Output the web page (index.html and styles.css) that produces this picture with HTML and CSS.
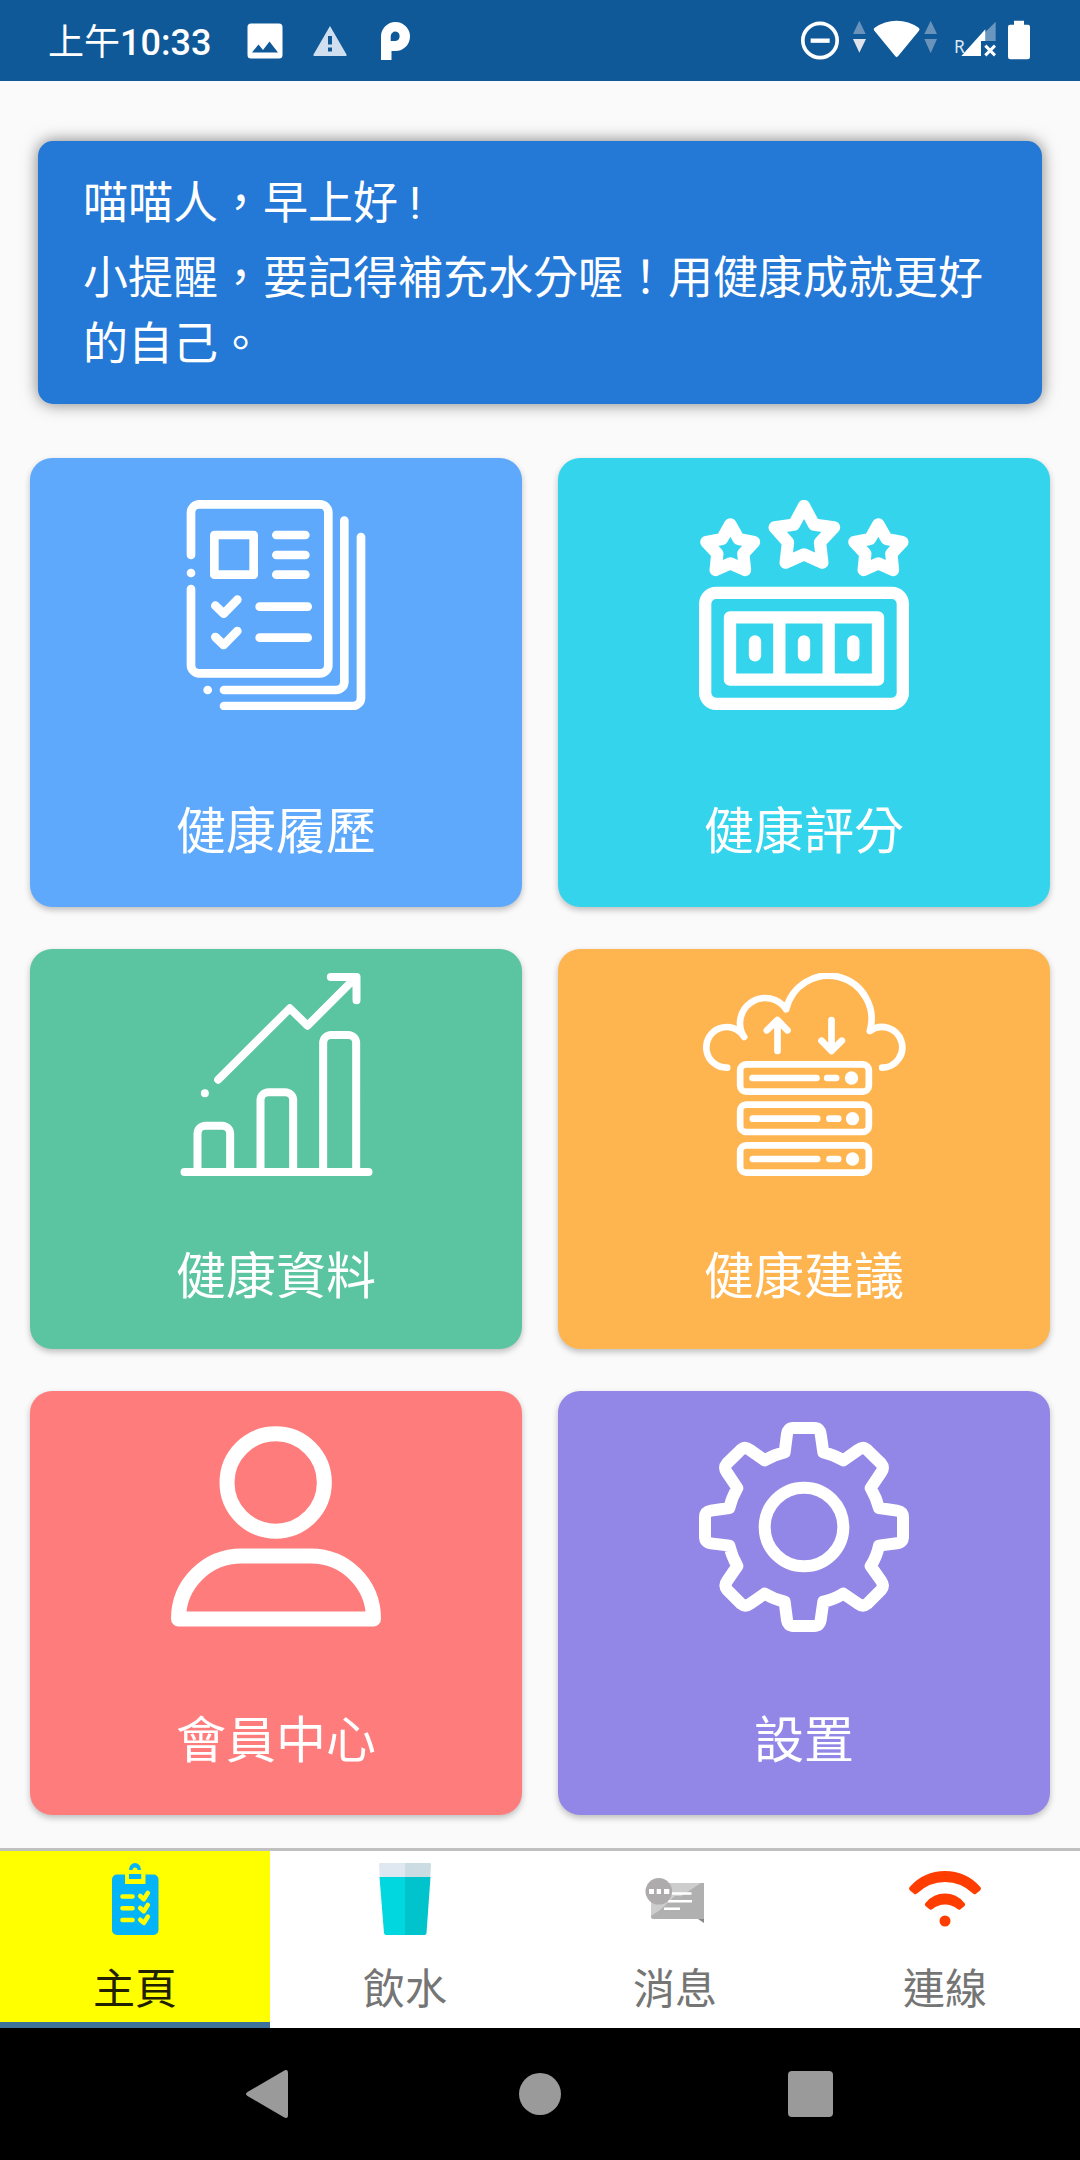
FILE: index.html
```html
<!doctype html>
<html lang="zh-Hant">
  <head>
    <meta charset="utf-8">
    <title>健康</title>
    <link rel="stylesheet" href="styles.css">
  </head>
  <body>
    <div class="status-bar">
      <span class="clock">上午<b>10:33</b></span>
      <svg class="st-image" width="36" height="36" viewBox="0 0 36 36"><path fill="#fff" fill-rule="evenodd" d="M4 0.500h28a3.500 3.500 0 0 1 3.500 3.500v28a3.500 3.500 0 0 1-3.500 3.500h-28a3.500 3.500 0 0 1-3.500-3.500v-28a3.500 3.500 0 0 1 3.500-3.500zM5 29.500h26l-8.500-11-6.500 8.500-4.500-5.500z"/></svg>
      <svg class="st-warn" width="34" height="30" viewBox="0 0 34 30"><path fill="#d0dfef" fill-rule="evenodd" d="M17 0L33.500 28.500Q34 30 32.500 30H1.500Q0 30 0.500 28.500ZM15 10v8.500h4V10zM15 21.500v4h4v-4z"/></svg>
      <svg class="st-park" width="29" height="38" viewBox="0 0 29 38"><path fill="#fff" fill-rule="evenodd" d="M0 38V14.500A14.500 14.500 0 1 1 14.500 29H10.500V38ZM14.500 9.500A4.800 4.800 0 0 0 9.700 14.300V19H14.500A4.800 4.800 0 0 0 14.500 9.500Z"/></svg>

      <svg class="st-dnd" width="38" height="81" viewBox="64 0 114 243"><circle cx="121" cy="121.500" r="51.500" fill="none" stroke="#fff" stroke-width="11"/><path stroke="#fff" stroke-width="13" d="M93 122h57"/></svg>
      <svg class="st-wifi" width="84" height="81" viewBox="219 0 252 243">
        <path fill="#6a93bb" d="M238 62l19 40h-38zM452 62l19 40h-38zM452 160l19-43h-38z"/>
        <path fill="#e0e4ea" d="M238 158l20-41h-39z"/>
        <path fill="#fff" d="M282 91Q279 87 284 83Q314 62 350 62T416 83Q421 87 417 92L354 169Q350 174 346 169Z"/>
      </svg>
      <svg class="st-signal" width="42" height="81" viewBox="523 0 126 243">
        <path fill="#6a97bf" d="M617 96L648 65V123H617z"/>
        <path fill="#fff" d="M545 168L617 88V123H604V168z"/>
        <path stroke="#fff" stroke-width="9" d="M617 137l29 29M646 137l-29 29"/>
        <text x="523" y="158" class="roaming">R</text>
      </svg>
      <svg class="st-battery" width="22" height="81" viewBox="684 0 66 243"><path fill="#fff" d="M702 62h30v12h12q6 0 6 6v91q0 7-7 7h-52q-7 0-7-7v-91q0-6 6-6h12z"/></svg>
    </div>

    <div class="main">
      <div class="banner">
        <p class="hello">喵喵人，早上好 !</p>
        <p>小提醒，要記得補充水分喔！用健康成就更好的自己。</p>
      </div>

      <div class="cards">
        <div class="card history">
          <svg width="210" height="210" viewBox="33 60 630 630" stroke-width="26">
            <path d="M93 225V98a25 25 0 0 1 25-25H480a25 25 0 0 1 25 25V555a25 25 0 0 1-25 25H118a25 25 0 0 1-25-25V327"/>
            <path d="M93 279h.1M143 630h.1M192 630H528a25 25 0 0 0 25-25V122M192 678H578a25 25 0 0 0 25-25V171"/>
            <path d="M163 165H281V284H163ZM349 165H436M349 225H436M349 284H436M299 380H443M299 473H443"/>
            <path d="M166 377l25 24 41-42M166 471l25 24 41-42"/>
          </svg>
          <div class="label">健康履歷</div>
        </div>
        <div class="card score">
          <svg width="210" height="210" viewBox="57 60 630 630" stroke-width="37">
            <path d="M372 78L402 134 462 142 420 187 427 248 372 223 317 248 324 187 284 142 342 134Z"/>
            <path d="M151 133L176 177 222 186 190 221 195 270 151 250 107 270 112 221 79 186 126 177Z"/>
            <path d="M595 133L620 177 667 186 634 221 639 270 595 250 551 270 556 221 523 186 570 177Z"/>
            <rect x="75.500" y="338.500" width="593" height="333" rx="33"/>
            <path d="M150 412H594V599H150ZM298 412V599M446 412V599"/>
            <path d="M225 484V526M372 484V526M520 484V526"/>
          </svg>
          <div class="label">健康評分</div>
        </div>
        <div class="card data">
          <svg width="203" height="203" viewBox="43.500 69 609 609" stroke-width="24">
            <path d="M72 666H624M111 666V551a24 24 0 0 1 24-24H185a24 24 0 0 1 24 24V666M300 666V451a24 24 0 0 1 24-24H374a24 24 0 0 1 24 24V666M488 666V279a24 24 0 0 1 24-24H563a24 24 0 0 1 24 24V666"/>
            <path d="M133 430h.1M173 389L388 175 441 227 583 85M511 81H588V151"/>
          </svg>
          <div class="label">健康資料</div>
        </div>
        <div class="card advice">
          <svg width="203" height="203" viewBox="67.500 69 609 609" stroke-width="20">
            <path d="M140 353A61 61 0 1 1 191 261A73 73 0 0 1 317 178A129.700 129.700 0 1 1 568 243A61 61 0 1 1 605 353"/>
            <path d="M291 303V211M259 241L291 210 321 241M453 210V302M423 272L453 303 484 272"/>
            <rect x="179" y="343" width="386" height="82" rx="18"/>
            <rect x="179" y="464" width="386" height="82" rx="18"/>
            <rect x="179" y="586" width="386" height="82" rx="18"/>
            <path d="M216 384H408M440 384H467M217 506H410M447 506H473M217 627H410M447 627H473"/>
            <path stroke-width="40" d="M513 384h.1M516 506h.1M516 627h.1"/>
          </svg>
          <div class="label">健康建議</div>
        </div>
        <div class="card member">
          <svg width="210" height="210" viewBox="63 66 630 630" stroke-width="45">
            <circle cx="377" cy="247.500" r="146"/>
            <path d="M85.500 657C85.500 552 170 468 275 468H482C587 468 670.500 552 670.500 657Z"/>
          </svg>
          <div class="label">會員中心</div>
        </div>
        <div class="card settings">
          <svg width="210" height="210" viewBox="57 66 630 630" stroke-width="36">
            <path d="M340 84H403Q420 84 422 102L430 157Q462 164 490 181L534 150Q549 138 562 150L603 190Q614 203 603 218L572 264Q589 293 597 324L651 332Q669 335 669 352V410Q669 428 651 430L597 437Q590 470 572 498L603 542Q614 557 603 570L562 611Q549 622 534 611L490 581Q462 599 430 605L422 660Q420 678 403 678H340Q323 678 321 660L314 605Q282 598 254 581L211 611Q196 622 183 611L142 570Q131 557 142 542L172 498Q155 468 148 437L93 430Q75 428 75 410V352Q75 335 93 332L148 324Q155 293 172 264L141 218Q130 203 141 190L182 150Q195 138 210 150L254 181Q282 164 314 157L321 102Q323 84 340 84Z"/>
            <circle cx="372" cy="381" r="118"/>
          </svg>
          <div class="label">設置</div>
        </div>
      </div>
    </div>

    <div class="tabs">
      <div class="tab active">
        <svg width="72" height="72" viewBox="0 0 72 72">
          <path fill="#04b4f8" d="M18 11.500H26V21H46.500V11.500H54.500a5 5 0 0 1 5 5V67a5 5 0 0 1-5 5H18a5 5 0 0 1-5-5V16.500a5 5 0 0 1 5-5z"/>
          <path fill="#04b4f8" d="M30 11h12.200v5H30zM30 7A6 7 0 0 1 42 7H38.500A2.500 2.500 0 0 0 33.500 7z"/>
          <g fill="none" stroke="#ff0" stroke-width="4.600" stroke-linecap="round"><path d="M23.500 33.500H33.500M23.500 45.200H33.500M23.500 57H33.500"/><path stroke-linejoin="round" d="M41.200 33l3.600 3.200 4-6.200M41.200 45l3.600 3.200 4-6.200M41.200 56.700l3.600 3.200 4-6.200"/></g>
        </svg>
        <div class="tab-label">主頁</div>
      </div>
      <div class="tab">
        <svg width="72" height="72" viewBox="0 0 72 72">
          <path fill="#dfe8f0" d="M10 1q0-1 1-1H36V15H10.800z"/><path fill="#cbdde3" d="M36 0H61q1 0 1 1L61.200 15H36z"/>
          <path fill="#00d7df" d="M10.500 14H36V72H17q-1.500 0-2-2z"/><path fill="#00c3cb" d="M36 14H61.500L57.500 70q0 2-2 2H36z"/>
        </svg>
        <div class="tab-label">飲水</div>
      </div>
      <div class="tab">
        <svg width="72" height="72" viewBox="0 0 72 72">
          <path fill="#b0b0b0" d="M12 20H65V56H14q-2 0-2-2z"/>
          <path fill="#cdcdcd" d="M12 20H62L12 53z"/>
          <path fill="#b0b0b0" d="M36 33H42L20 48z"/>
          <path fill="#888" d="M59 56H65V60z"/>
          <path stroke="#fff" stroke-width="2.600" d="M31 30.500H52.500M29 38.200H53M25 45.800H41"/>
          <circle cx="19.800" cy="28.300" r="13.300" fill="#adabab"/>
          <path fill="#fff" d="M10 26h5v5h-5zM17.700 26h4.300v5h-4.300zM25 26h5.300v5H25z"/>
        </svg>
        <div class="tab-label">消息</div>
      </div>
      <div class="tab">
        <svg width="72" height="72" viewBox="0 0 72 72">
          <path fill="#ff3d00" d="M1.200 23.500Q15 8 36 8T70.800 23.500Q73 25.500 71 27.500L67 30.700Q65.500 32 64 30.500Q52 19 36 19T8 30.500Q6.500 32 5 30.700L1 27.500Q-1 25.500 1.200 23.500ZM17 39.500Q24.500 30.500 36 30.500T55 39.500Q57 41.500 55.500 43L51.500 46.300Q50 47.500 48.500 46Q43 41.500 36 41.500T23.500 46Q22 47.500 20.500 46.300L16.500 43Q15 41.500 17 39.500Z"/>
          <circle cx="36" cy="58" r="5.500" fill="#ff3d00"/>
        </svg>
        <div class="tab-label">連線</div>
      </div>
    </div>

    <div class="nav-bar">
      <svg width="42" height="48" viewBox="0 0 42 48"><path fill="#9a9a9a" d="M1.500 22L37.500 1Q42-1.500 42 3V45Q42 49.500 37.500 47L1.500 26Q-1.500 24 1.500 22Z"/></svg>
      <div class="home"></div>
      <div class="recent"></div>
    </div>
  </body>
</html>
```
FILE: styles.css
```css
body {
  margin: 0;
  width: 1080px;
  height: 2160px;
  display: flex;
  flex-direction: column;
  overflow: hidden;
  background: #fafafa;
  font-family: Roboto, "Noto Sans CJK TC", sans-serif;
}
p {
  margin: 0;
}
svg {
  flex: none;
  display: block;
}

/* status bar */
.status-bar {
  display: flex;
  align-items: center;
  flex: none;
  height: 81px;
  padding: 0 50px 0 48px;
  background: #0f5998;
}
.clock {
  width: 199px;
  padding-bottom: 3px;
  color: #fff;
  font-size: 36px;
  white-space: nowrap;
}
.clock b {
  font-weight: 500;
}
.st-warn {
  margin-left: 30px;
}
.st-park {
  margin-left: 34px;
}
.st-dnd {
  margin-left: auto;
}
.st-wifi {
  margin-left: 14px;
}
.st-signal {
  margin-left: 17px;
}
.st-battery {
  margin-left: 12px;
}
.roaming {
  fill: #dce8f4;
  font-family: "Noto Sans", sans-serif;
  font-size: 52px;
}

/* greeting and cards */
.main {
  flex: none;
  height: 1767px;
  box-sizing: border-box;
  padding: 60px 30px 0;
}
.banner {
  margin: 0 8px;
  height: 263px;
  box-sizing: border-box;
  padding: 30px 47px 0 45px;
  border-radius: 15px;
  background: #2478d6;
  box-shadow: 0 0 16px rgba(0, 0, 0, .5);
  color: #fff;
  font-size: 45px;
  line-height: 66px;
}
.hello {
  margin-bottom: 9px;
}
.cards {
  display: grid;
  grid-template-columns: 492px 492px;
  grid-template-rows: 449px 400px 424px;
  gap: 42px 36px;
  margin-top: 54px;
}
.card {
  display: flex;
  flex-direction: column;
  align-items: center;
  box-sizing: border-box;
  border-radius: 22px;
  box-shadow: 0 3px 6px rgba(0, 0, 0, .24);
}
.card svg {
  fill: none;
  stroke: #fff;
  stroke-linecap: round;
  stroke-linejoin: round;
}
.label {
  color: #fff;
  font-size: 50px;
  line-height: 72px;
}
.history,
.score {
  padding-top: 42px;
  gap: 86px;
}
.data,
.advice {
  padding-top: 24px;
  gap: 65px;
}
.member,
.settings {
  padding-top: 31px;
  gap: 73px;
}
.history { background: #5fa9fc; }
.score { background: #34d4ec; }
.data { background: #5bc4a0; }
.advice { background: #ffb54f; }
.member { background: #ff7c7c; }
.settings { background: #9287e6; }

/* bottom tabs */
.tabs {
  display: flex;
  flex: none;
  height: 177px;
  border-top: 3px solid #c0c0c0;
  background: #fff;
}
.tab {
  display: flex;
  flex-direction: column;
  align-items: center;
  flex: 1;
  box-sizing: border-box;
  padding-top: 12px;
  color: #757575;
  border-bottom: 6px solid #fff;
}
.tab.active {
  background: #ff0;
  color: #212100;
  border-bottom-color: #3f729b;
}
.tab-label {
  margin-top: 25px;
  font-size: 42px;
  line-height: 60px;
}

/* system navigation */
.nav-bar {
  display: flex;
  align-items: center;
  flex: 1;
  padding: 0 0 0 246px;
  background: #000;
}
.home {
  width: 42px;
  height: 42px;
  margin-left: 231px;
  border-radius: 50%;
  background: #9a9a9a;
}
.recent {
  width: 45px;
  height: 46px;
  margin-left: 227px;
  border-radius: 4px;
  background: #9a9a9a;
}
```
